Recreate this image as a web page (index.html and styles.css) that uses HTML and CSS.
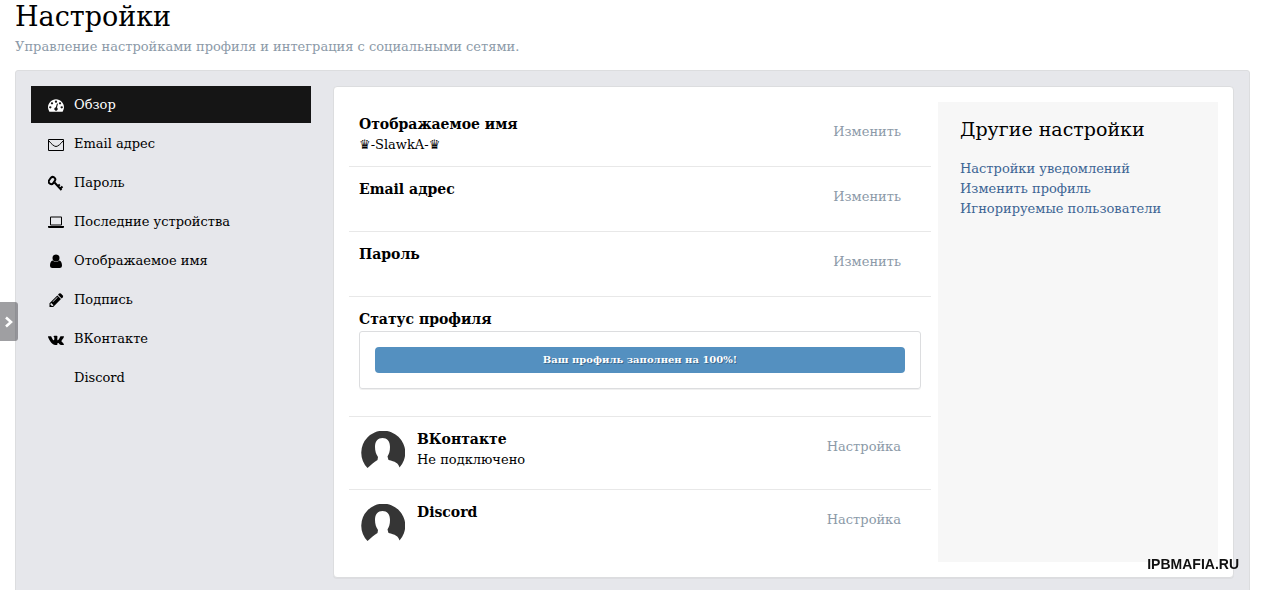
FILE: index.html
```html
<!DOCTYPE html>
<html lang="ru">
<head>
<meta charset="utf-8">
<meta name="viewport" content="width=device-width, initial-scale=1">
<title>Настройки</title>
<link rel="stylesheet" href="styles.css">
</head>
<body>
<svg class="sprite" aria-hidden="true">
  <symbol id="avatar" viewBox="0 0 44 44">
    <path d="M6.500 37 A22 22 0 1 1 38.500 36.500 C37.500 32 34 30.500 27.500 29 L26.500 25.500 C28 23 29 20.500 29 16 C29 10 26 7 21.500 7 C17 7 14 10 14 16 C14 20 15 23 17 26 L16.500 29 C13 31 9.500 34.500 6.500 37 Z"/>
  </symbol>
</svg>
<header class="page-header">
  <h1 class="page-title">Настройки</h1>
  <p class="page-desc">Управление настройками профиля и интеграция с социальными сетями.</p>
</header>
<main class="panel">
  <nav class="menu">
    <a class="menu-item menu-item-active" href="#">
      <svg class="icon" viewBox="0 0 1792 1792"><path d="M384 1152q0-53-37.500-90.500t-90.500-37.500-90.500 37.500-37.500 90.500 37.500 90.500 90.500 37.500 90.500-37.500 37.500-90.500zm192-448q0-53-37.500-90.500t-90.500-37.500-90.500 37.500-37.500 90.500 37.500 90.500 90.500 37.500 90.500-37.500 37.500-90.500zm428 481l101-382q6-26-7.500-48.500t-38.500-29.500-48 6.500-30 39.500l-101 382q-60 5-107 43.500t-63 98.500q-20 77 20 146t117 89 146-20 89-117q16-60-6-117t-72-91zm660-33q0-53-37.500-90.500t-90.500-37.500-90.500 37.500-37.500 90.500 37.500 90.500 90.500 37.500 90.500-37.500 37.500-90.500zm-640-640q0-53-37.500-90.500t-90.500-37.500-90.500 37.500-37.500 90.500 37.500 90.500 90.500 37.500 90.500-37.500 37.500-90.500zm448 192q0-53-37.500-90.500t-90.500-37.500-90.500 37.500-37.500 90.500 37.500 90.500 90.500 37.500 90.500-37.500 37.500-90.500zm320 448q0 261-141 483-19 29-54 29h-1402q-35 0-54-29-141-221-141-483 0-182 71-348t191-286 286-191 348-71 348 71 286 191 191 286 71 348z"/></svg>
      <span>Обзор</span>
    </a>
    <a class="menu-item" href="#">
      <svg class="icon icon-line" viewBox="0 0 16 16"><path d="M.5 3.500 H15.500 V14.500 H.5Z M1 5 C3 7.500 6 10.500 8 10.500 S13 7.500 15 5"/></svg>
      <span>Email адрес</span>
    </a>
    <a class="menu-item" href="#">
      <svg class="icon icon-heavy" viewBox="0 0 16 16"><rect x="1.500" y="1.800" width="5" height="7.500" rx="2.400" transform="rotate(35 4 5.500)"/><path d="M6.500 7.500 L13.500 15 M10 11 L11.800 9.500 M12.300 13.500 L14.500 11.500"/></svg>
      <span>Пароль</span>
    </a>
    <a class="menu-item" href="#">
      <svg class="icon" viewBox="0 0 16 16"><path fill-rule="evenodd" d="M3 2.500h10q1 0 1 1v7q0 1-1 1H3q-1 0-1-1v-7q0-1 1-1zm0 1v7h10v-7zM0 12h16v1q0 1-1 1H1q-1 0-1-1z"/></svg>
      <span>Последние устройства</span>
    </a>
    <a class="menu-item" href="#">
      <svg class="icon" viewBox="0 0 16 16"><circle cx="8" cy="5" r="3.500"/><path d="M4.600 7.500 C3 7.700 2 10 2 12.500 C2 14.200 3 15 4.300 15 H11.700 C13 15 14 14.200 14 12.500 C14 10 13 7.700 11.400 7.500 C9.500 9.300 6.500 9.300 4.600 7.500Z"/></svg>
      <span>Отображаемое имя</span>
    </a>
    <a class="menu-item" href="#">
      <svg class="icon" viewBox="0 0 16 16"><path fill-rule="evenodd" d="M1.500 11.200 L9.300 3.400 L13 7.100 L5.200 15 H1.500Z M2.500 11.800 V13 H3.400 V14 H4.700 L5.500 13.200 L3.300 11Z M9.200 5 L4.600 9.600 L5 10 L9.600 5.400Z"/><path d="M10 2.700 L11.100 1.600 Q12 .9 12.900 1.600 L14.800 3.500 Q15.500 4.400 14.800 5.300 L13.700 6.400Z"/></svg>
      <span>Подпись</span>
    </a>
    <a class="menu-item" href="#">
      <svg class="icon" viewBox="0 -2 24 24"><path d="M13.162 18.994c.609 0 .858-.406.851-.915-.031-1.917.714-2.949 2.059-1.604 1.488 1.488 1.796 2.519 3.603 2.519h3.200c.808 0 1.126-.26 1.126-.668 0-.863-1.421-2.386-2.625-3.504-1.686-1.565-1.765-1.602-.313-3.486 1.801-2.339 4.157-5.336 2.073-5.336h-3.981c-.772 0-.828.435-1.103 1.083-.995 2.347-2.886 5.387-3.604 4.922-.751-.485-.407-2.406-.35-5.261.015-.754.011-1.271-1.141-1.539-.629-.145-1.241-.205-1.809-.205-2.273 0-3.841.953-2.950 1.119 1.571.293 1.420 3.692 1.054 5.160-.638 2.556-3.036-2.024-4.035-4.305-.241-.548-.315-.974-1.175-.974h-3.255c-.492 0-.787.16-.787.516 0 .602 2.960 6.720 5.786 9.770 2.756 2.975 5.480 2.708 7.376 2.708z"/></svg>
      <span>ВКонтакте</span>
    </a>
    <a class="menu-item" href="#">
      <span class="icon"></span>
      <span>Discord</span>
    </a>
  </nav>
  <div class="card">
    <div class="rows">
      <section class="row">
        <div class="row-body">
          <h2 class="row-title">Отображаемое имя</h2>
          <p class="row-text">♛-SlawkA-♛</p>
        </div>
        <a class="row-action" href="#">Изменить</a>
      </section>
      <section class="row">
        <div class="row-body"><h2 class="row-title">Email адрес</h2></div>
        <a class="row-action" href="#">Изменить</a>
      </section>
      <section class="row">
        <div class="row-body"><h2 class="row-title">Пароль</h2></div>
        <a class="row-action" href="#">Изменить</a>
      </section>
      <section class="row row-status">
        <div class="row-body">
          <h2 class="row-title">Статус профиля</h2>
          <div class="progress-box"><div class="progress">Ваш профиль заполнен на 100%!</div></div>
        </div>
      </section>
      <section class="row row-service">
        <svg class="avatar"><use href="#avatar"/></svg>
        <div class="row-body">
          <h2 class="row-title">ВКонтакте</h2>
          <p class="row-text">Не подключено</p>
        </div>
        <a class="row-action" href="#">Настройка</a>
      </section>
      <section class="row row-service">
        <svg class="avatar"><use href="#avatar"/></svg>
        <div class="row-body"><h2 class="row-title">Discord</h2></div>
        <a class="row-action" href="#">Настройка</a>
      </section>
    </div>
    <aside class="other">
      <h2 class="other-title">Другие настройки</h2>
      <ul class="other-list">
        <li><a href="#">Настройки уведомлений</a></li>
        <li><a href="#">Изменить профиль</a></li>
        <li><a href="#">Игнорируемые пользователи</a></li>
      </ul>
    </aside>
  </div>
</main>
<button class="drawer" type="button" aria-label="Открыть панель"><svg class="drawer-icon" viewBox="0 0 10 12"><path d="M2 1.500 L7 6 L2 10.500"/></svg></button>
<div class="watermark">IPBMAFIA.RU</div>
</body>
</html>
```
FILE: styles.css
```css
* {
  box-sizing: border-box;
}

html {
  scrollbar-width: none;
}

body {
  margin: 0;
  padding: 0 15px;
  background: #fff;
  color: #000;
  font: 13px/20px "Roboto Slab", "DejaVu Serif", "DejaVu Sans", serif;
}

h1, h2, p, ul {
  margin: 0;
  padding: 0;
}

a {
  text-decoration: none;
}

.sprite {
  display: none;
}

.page-title {
  font-size: 27px;
  line-height: 34px;
  font-weight: 400;
}

.page-desc {
  margin-top: 3px;
  color: #8c9aa8;
}

.panel {
  display: flex;
  gap: 22px;
  align-items: flex-start;
  margin-top: 13px;
  padding: 15px;
  border: 1px solid #dcdddf;
  border-radius: 3px;
  background: #e6e7eb;
}

.menu {
  display: flex;
  flex: 0 0 280px;
  flex-direction: column;
  gap: 2px;
}

.menu-item {
  display: flex;
  align-items: center;
  gap: 10px;
  height: 37px;
  padding: 0 17px;
  color: #000;
}

.menu-item-active {
  background: #151515;
  color: #fff;
}

.icon {
  width: 16px;
  height: 16px;
  fill: currentColor;
}

.icon-line,
.icon-heavy {
  fill: none;
  stroke: currentColor;
  stroke-width: 1;
}

.icon-heavy {
  stroke-width: 2;
}

.card {
  display: flex;
  flex: 1;
  gap: 7px;
  min-width: 0;
  padding: 15px;
  border: 1px solid #dcdddf;
  border-radius: 4px;
  background: #fff;
  box-shadow: 0 1px 0 rgba(0, 0, 0, 0.04);
}

.rows {
  flex: 1;
  min-width: 0;
}

.row {
  display: flex;
  align-items: flex-start;
  min-height: 65px;
  padding: 12px 10px 10px;
  border-bottom: 1px solid #e8e8e8;
}

.row-status {
  padding-bottom: 27px;
}

.row-service {
  min-height: 73px;
}

.row:last-child {
  min-height: 72px;
  border-bottom: 0;
}

.row-body {
  flex: 1;
}

.row-title {
  font-size: 14px;
  line-height: 21px;
  font-weight: 700;
}

.row-action {
  margin: 8px 20px 0 0;
  color: #8c9aa8;
}

.avatar {
  width: 44px;
  height: 44px;
  margin: 2px 12px 0 2px;
  fill: #353535;
}

.progress-box {
  margin-top: 1px;
  padding: 15px;
  border: 1px solid #dcdddf;
  border-radius: 3px;
  box-shadow: 0 1px 0 rgba(0, 0, 0, 0.06);
}

.progress {
  border-radius: 4px;
  background: #5490c0;
  color: #fff;
  font-size: 10px;
  line-height: 26px;
  font-weight: 700;
  text-align: center;
  text-shadow: 1px 1px 0 rgba(0, 0, 0, 0.3);
}

.other {
  flex: 0 0 280px;
  padding: 12px 22px;
  background: #f7f7f7;
}

.other-title {
  margin-bottom: 15px;
  font-size: 19px;
  line-height: 30px;
  font-weight: 400;
  white-space: nowrap;
}

.other-list {
  list-style: none;
}

.other-list a {
  color: #3d6594;
}

.drawer {
  position: fixed;
  top: 302px;
  left: 0;
  display: flex;
  align-items: center;
  width: 18px;
  height: 39px;
  padding: 0 0 0 4px;
  border: 0;
  border-radius: 0 3px 3px 0;
  background: rgba(80, 80, 85, 0.55);
}

.drawer-icon {
  width: 10px;
  height: 12px;
  fill: none;
  stroke: #fff;
  stroke-width: 2.6;
}

.watermark {
  position: fixed;
  right: 26px;
  bottom: 16px;
  color: #111;
  font: 700 14px/20px "Liberation Sans", Arial, sans-serif;
}
```
